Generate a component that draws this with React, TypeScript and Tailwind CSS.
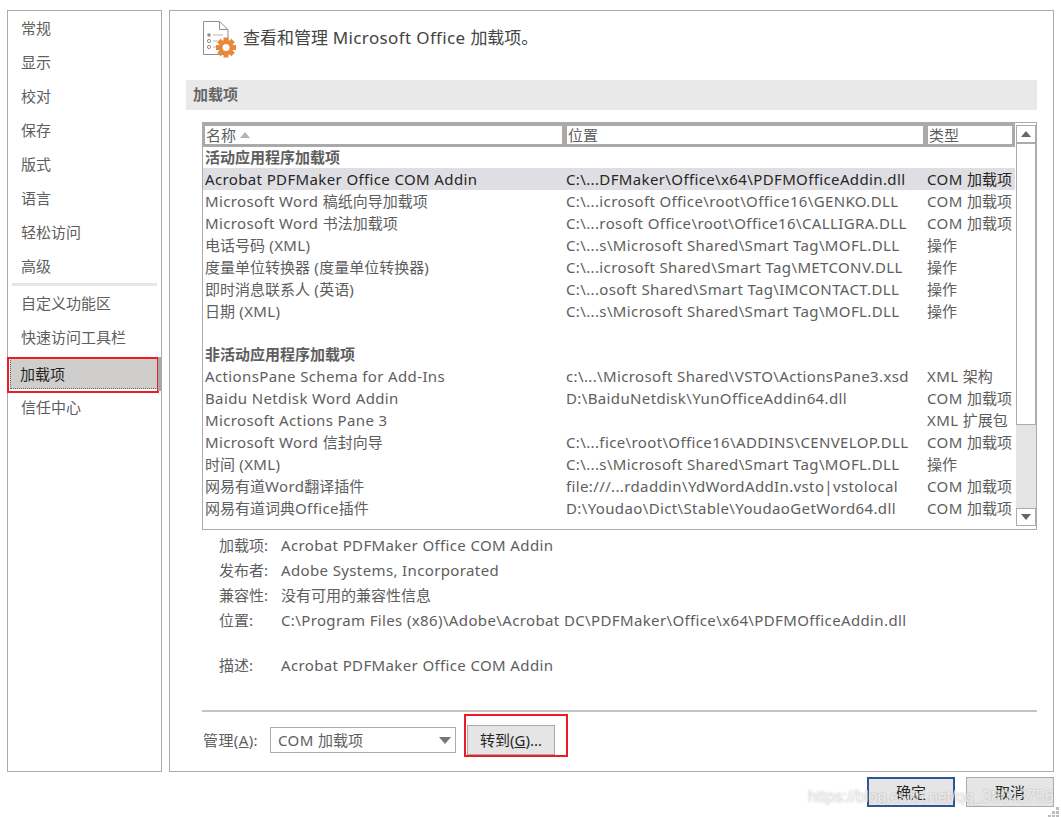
import React from "react";

const navTop = ["常规", "显示", "校对", "保存", "版式", "语言", "轻松访问", "高级"];

const activeRows = [
  ["Microsoft Word 稿纸向导加载项", "C:\\...icrosoft Office\\root\\Office16\\GENKO.DLL", "COM 加载项"],
  ["Microsoft Word 书法加载项", "C:\\...rosoft Office\\root\\Office16\\CALLIGRA.DLL", "COM 加载项"],
  ["电话号码 (XML)", "C:\\...s\\Microsoft Shared\\Smart Tag\\MOFL.DLL", "操作"],
  ["度量单位转换器 (度量单位转换器)", "C:\\...icrosoft Shared\\Smart Tag\\METCONV.DLL", "操作"],
  ["即时消息联系人 (英语)", "C:\\...osoft Shared\\Smart Tag\\IMCONTACT.DLL", "操作"],
  ["日期 (XML)", "C:\\...s\\Microsoft Shared\\Smart Tag\\MOFL.DLL", "操作"],
];

const inactiveRows = [
  ["ActionsPane Schema for Add-Ins", "c:\\...\\Microsoft Shared\\VSTO\\ActionsPane3.xsd", "XML 架构"],
  ["Baidu Netdisk Word Addin", "D:\\BaiduNetdisk\\YunOfficeAddin64.dll", "COM 加载项"],
  ["Microsoft Actions Pane 3", "", "XML 扩展包"],
  ["Microsoft Word 信封向导", "C:\\...fice\\root\\Office16\\ADDINS\\CENVELOP.DLL", "COM 加载项"],
  ["时间 (XML)", "C:\\...s\\Microsoft Shared\\Smart Tag\\MOFL.DLL", "操作"],
  ["网易有道Word翻译插件", "file:///...rdaddin\\YdWordAddIn.vsto|vstolocal", "COM 加载项"],
  ["网易有道词典Office插件", "D:\\Youdao\\Dict\\Stable\\YoudaoGetWord64.dll", "COM 加载项"],
];

const details = [
  ["加载项:", "Acrobat PDFMaker Office COM Addin"],
  ["发布者:", "Adobe Systems, Incorporated"],
  ["兼容性:", "没有可用的兼容性信息"],
  ["位置:", "C:\\Program Files (x86)\\Adobe\\Acrobat DC\\PDFMaker\\Office\\x64\\PDFMOfficeAddin.dll"],
];

// latin runs need a bit of tracking, the original font is wider than Noto Sans
function T({ text }: { text: string }) {
  return (
    <>
      {text.split(/([\x00-\x7f]+)/).map((part, i) =>
        i % 2 === 1 ? <span key={i} className="tracking-[0.37px]">{part}</span> : part
      )}
    </>
  );
}

function Row({ cells, selected }: { cells: string[]; selected?: boolean }) {
  return (
    <div className={"grid grid-cols-[361px_361px_1fr] w-[812px] h-[22px] items-center whitespace-nowrap pl-[2px] " + (selected ? "bg-[#dfdfe3] text-[#262626]" : "text-[#5e5e5e]")}>
      <div><T text={cells[0]} /></div>
      <div><T text={cells[1]} /></div>
      <div><T text={cells[2]} /></div>
    </div>
  );
}

function HeaderCell({ className, children }: { className: string; children: React.ReactNode }) {
  return <div className={"h-[24px] border-[3px] border-l-[2px] border-[#aaaaaa] bg-white pl-[1px] flex items-center text-[#5e5e5e] " + className}>{children}</div>;
}

function AddinsIcon() {
  return (
    <svg width="36" height="38" viewBox="0 0 36 38" className="shrink-0">
      <path d="M0.5 1.5 H16.5 L25 9.5 V34.5 H0.5 Z M16.5 1.5 V9.5 H25" fill="#fff" stroke="#8f8f8f" />
      <circle cx="6" cy="15" r="1.8" fill="#8f8f8f" />
      <path d="M10 15 H20" stroke="#b5b5b5" />
      <circle cx="6" cy="21" r="1.6" fill="#fff" stroke="#8f8f8f" />
      <path d="M10 21 H15" stroke="#b5b5b5" />
      <circle cx="6" cy="27" r="1.6" fill="#fff" stroke="#8f8f8f" />
      <path d="M10 27 H14" stroke="#b5b5b5" />
      <g fill="#e8893a">
        <circle cx="23" cy="27.5" r="7.5" />
        <rect x="20.5" y="17.5" width="5" height="20" />
        <rect x="13" y="25" width="20" height="5" />
        <rect x="20.5" y="17.5" width="5" height="20" transform="rotate(45 23 27.5)" />
        <rect x="20.5" y="17.5" width="5" height="20" transform="rotate(-45 23 27.5)" />
      </g>
      <circle cx="23" cy="27.5" r="3.5" fill="#fff" />
    </svg>
  );
}

export default function App() {
  return (
    <div className="relative w-[1061px] h-[817px] overflow-hidden bg-white text-[15px] leading-[22px] font-['Noto_Sans','Noto_Sans_CJK_SC',sans-serif] text-[#5e5e5e]">
      <div className="flex gap-[7px] pl-[7px] pt-[10px]">
        {/* left nav */}
        <div className="w-[155px] h-[762px] border border-[#ababab] flex flex-col shrink-0">
          {navTop.map((t) => (
            <div key={t} className="h-[34px] pl-[13px] flex items-center">{t}</div>
          ))}
          <div className="h-[3px] mx-[4px] bg-[#e6e6e6]" />
          <div className="h-[34px] pl-[13px] flex items-center">自定义功能区</div>
          <div className="h-[34px] pl-[13px] flex items-center">快速访问工具栏</div>
          <div className="relative h-[31px] mt-[4px] ml-[2px] mr-[3px] bg-[#cfcecc] border border-dotted border-[#666] pl-[9px] flex items-center text-[#262626]">
            加载项
            <div className="absolute -left-[4px] -top-[2px] -right-[2px] -bottom-[5px] border-2 border-[#ed1c24]" />
            <div className="absolute -right-[4px] -top-[2px] bottom-[-3px] w-[3px] bg-[#a8a8a8]" />
          </div>
          <div className="h-[34px] mt-[1px] pl-[13px] flex items-center">信任中心</div>
        </div>

        {/* main panel */}
        <div className="relative w-[885px] h-[762px] border border-[#ababab] shrink-0 flex flex-col">
          <div className="flex items-center gap-[4px] pl-[33px] pt-[9px] h-[47px]">
            <AddinsIcon />
            <div className="text-[17px] leading-[24px] text-[#444444] -translate-y-[1px]"><T text="查看和管理 Microsoft Office 加载项。" /></div>
          </div>
          <div className="mt-[22px] ml-[16px] mr-[16px] h-[30px] bg-[#e9e9e9] pl-[7px] pb-[2px] flex items-center font-bold text-[#666666]">加载项</div>

          {/* add-ins list */}
          <div className="mt-[12px] ml-[32px] mr-[16px] h-[408px] border border-[#ababab] flex">
            <div className="w-[813px] shrink-0 overflow-hidden">
              <div className="flex bg-[#aaaaaa] w-[812px] h-[24px]">
                <HeaderCell className="w-[362px]">
                  名称
                  <svg width="10" height="6" viewBox="0 0 10 6" className="ml-[4px]"><path d="M0 6 L5 0 L10 6 Z" fill="#b8b5a8" /></svg>
                </HeaderCell>
                <HeaderCell className="w-[361px]">位置</HeaderCell>
                <HeaderCell className="w-[89px]">类型</HeaderCell>
              </div>
              <div className="h-[21px] pl-[2px] pb-[2px] flex items-center font-bold">活动应用程序加载项</div>
              <Row selected cells={["Acrobat PDFMaker Office COM Addin", "C:\\...DFMaker\\Office\\x64\\PDFMOfficeAddin.dll", "COM 加载项"]} />
              {activeRows.map((r) => (
                <Row key={r[0]} cells={r} />
              ))}
              <div className="h-[22px]" />
              <div className="h-[21px] pl-[2px] pb-[2px] flex items-center font-bold">非活动应用程序加载项</div>
              {inactiveRows.map((r) => (
                <Row key={r[0]} cells={r} />
              ))}
            </div>
            <div className="w-[20px] mt-[2px] mb-[3px] flex flex-col">
              <div className="h-[19px] bg-white border border-b-[2px] border-[#ababab] flex items-center justify-center">
                <svg width="10" height="6" viewBox="0 0 10 6"><path d="M0 6 L5 0 L10 6 Z" fill="#666" /></svg>
              </div>
              <div className="h-[281px] bg-white border border-t-0 border-[#ababab]" />
              <div className="flex-1 bg-[#e4e4e4]" />
              <div className="h-[18px] bg-white border border-[#ababab] flex items-center justify-center">
                <svg width="10" height="6" viewBox="0 0 10 6"><path d="M0 0 L5 6 L10 0 Z" fill="#666" /></svg>
              </div>
            </div>
          </div>

          {/* details */}
          <div className="mt-[2px] ml-[49px]">
            {details.map((d) => (
              <div key={d[0]} className="h-[25px] flex items-center whitespace-nowrap">
                <div className="w-[62px]">{d[0]}</div>
                <div><T text={d[1]} /></div>
              </div>
            ))}
            <div className="h-[20px]" />
            <div className="h-[25px] flex items-center whitespace-nowrap">
              <div className="w-[62px]">描述:</div>
              <div><T text="Acrobat PDFMaker Office COM Addin" /></div>
            </div>
          </div>

          <div className="mt-[33px] ml-[32px] mr-[16px] h-[2px] bg-[#c4c4c4]" />

          {/* manage row */}
          <div className="flex items-center ml-[33px] mt-[13px] h-[30px]">
            <div className="w-[67px] tracking-[0.4px]">管理(<span className="underline">A</span>):</div>
            <div className="w-[186px] h-[26px] border border-[#ababab] pl-[7px] pr-[4px] flex items-center justify-between">
              <span><T text="COM 加载项" /></span>
              <svg width="12" height="7" viewBox="0 0 12 7"><path d="M0 0 L6 7 L12 0 Z" fill="#777" /></svg>
            </div>
            <div className="relative ml-[11px] w-[88px] h-[30px] border border-[#ababab] bg-[#e5e5e5] flex items-center justify-center text-[#262626]">
              转到(<span className="underline">G</span>)...
              <div className="absolute -left-[4px] -top-[12px] -right-[14px] -bottom-[3px] border-2 border-[#ed1c24]" />
            </div>
          </div>
        </div>
      </div>

      {/* dialog buttons */}
      <div className="flex justify-end gap-[11px] pr-[7px] mt-[5px]">
        <div className="w-[88px] h-[30px] border-2 border-[#2b579a] bg-[#e5e5e5] flex items-center justify-center text-[#262626]">确定</div>
        <div className="w-[88px] h-[30px] border border-[#ababab] bg-[#e5e5e5] flex items-center justify-center text-[#262626]">取消</div>
      </div>

      {/* watermark */}
      <div className="absolute left-[808px] top-[787px] text-[16px] leading-[20px] text-white/70 whitespace-nowrap font-['Liberation_Sans',sans-serif] [text-shadow:0_0_2px_rgba(120,120,120,0.55)]">https://blog.csdn.net/qq_38043756</div>

      {/* resize grip */}
      <div className="absolute left-[1048px] top-[807px] grid grid-cols-3 gap-[1px] w-[11px]">
        {[0, 1, 2, 3, 4, 5, 6, 7, 8].map((i) => (
          <div key={i} className={"w-[3px] h-[3px] " + ([0, 1, 3].includes(i) ? "bg-transparent" : "bg-[#bdbdbd]")} />
        ))}
      </div>
    </div>
  );
}
